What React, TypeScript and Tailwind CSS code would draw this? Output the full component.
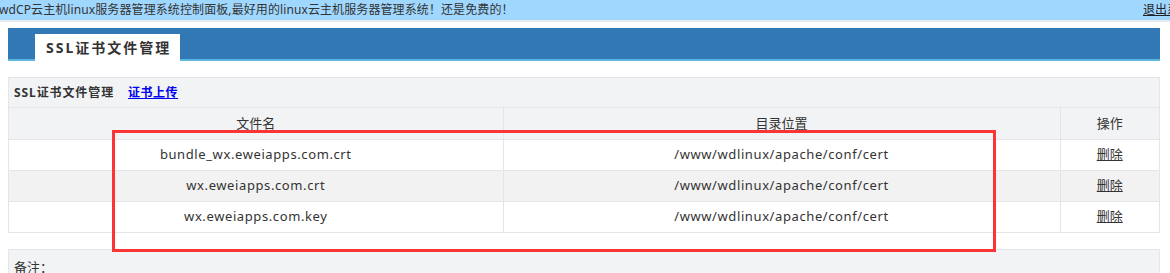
import React from "react";

const font = { fontFamily: '"Noto Sans", "Noto Sans CJK SC", sans-serif' };

const rows = [
  { name: "bundle_wx.eweiapps.com.crt", dir: "/www/wdlinux/apache/conf/cert", bg: "bg-white" },
  { name: "wx.eweiapps.com.crt", dir: "/www/wdlinux/apache/conf/cert", bg: "bg-[#f2f2f2]" },
  { name: "wx.eweiapps.com.key", dir: "/www/wdlinux/apache/conf/cert", bg: "bg-white" },
];

export default function App() {
  return (
    <div className="relative w-[1170px] h-[273px] overflow-hidden bg-white text-[#333]" style={font}>
      {/* top bar */}
      <div className="flex h-[20px] items-center overflow-hidden bg-[#a0d7ff] text-[12px] leading-[20px] whitespace-nowrap">
        <span className="-ml-[1px] tracking-[0.1px]">wdCP云主机linux服务器管理系统控制面板,最好用的linux云主机服务器管理系统！还是免费的！</span>
        <a className="ml-auto shrink-0 -mr-[21px] underline text-[#222]">退出系统</a>
      </div>
      <div className="h-[2px] bg-[#e6ebf0]" />

      {/* blue header */}
      <div className="ml-[8px] mt-[6px] w-[1152px] h-[33px] bg-[#3278b4] border-b-[2px] border-[#5cb6e2] flex items-end pl-[27px]">
        <div className="bg-white w-[145px] h-[27px] -mb-[2px] flex items-center pl-[11px] font-bold text-[14px] tracking-[2px] text-[#333]">
          SSL证书文件管理
        </div>
      </div>

      {/* panel */}
      <div className="ml-[8px] mt-[16px] w-[1152px] border border-[#e3e5ea] bg-[#f2f3f5]">
        <div className="h-[30px] flex items-center pl-[5px] text-[12px] border-b border-[#e3e5ea]">
          <span className="font-bold tracking-[0.9px]">SSL证书文件管理</span>
          <a className="ml-[14px] text-[#0000ee] underline font-bold text-[12px] tracking-[0.5px]">证书上传</a>
        </div>
        <table className="w-full table-fixed border-collapse text-[13px]">
          <colgroup>
            <col className="w-[494px]" />
            <col className="w-[557px]" />
            <col />
          </colgroup>
          <thead>
            <tr className="h-[31px]">
              <th className="font-normal border-r border-b border-[#e3e5ea] text-center">文件名</th>
              <th className="font-normal border-r border-b border-[#e3e5ea] text-center">目录位置</th>
              <th className="font-normal border-b border-[#e3e5ea] text-center">操作</th>
            </tr>
          </thead>
          <tbody>
            {rows.map((r, i) => (
              <tr key={i} className={`h-[31px] ${r.bg}`}>
                <td className={`text-center tracking-[0.6px] border-r border-[#e3e5ea] ${i < 2 ? "border-b" : ""}`}>{r.name}</td>
                <td className={`text-center tracking-[0.6px] border-r border-[#e3e5ea] ${i < 2 ? "border-b" : ""}`}>{r.dir}</td>
                <td className={`text-center border-[#e3e5ea] ${i < 2 ? "border-b" : ""}`}>
                  <a className="underline">删除</a>
                </td>
              </tr>
            ))}
          </tbody>
        </table>
      </div>

      {/* remarks panel */}
      <div className="ml-[8px] mt-[16px] w-[1152px] h-[40px] border border-[#e3e5ea] bg-[#f2f3f5] pl-[5px] pt-[8px] text-[13px]">
        备注：
      </div>

      {/* red annotation */}
      <div className="absolute left-[112px] top-[130px] w-[884px] h-[122px] border-[3px] border-[#fb3535]" />
    </div>
  );
}
